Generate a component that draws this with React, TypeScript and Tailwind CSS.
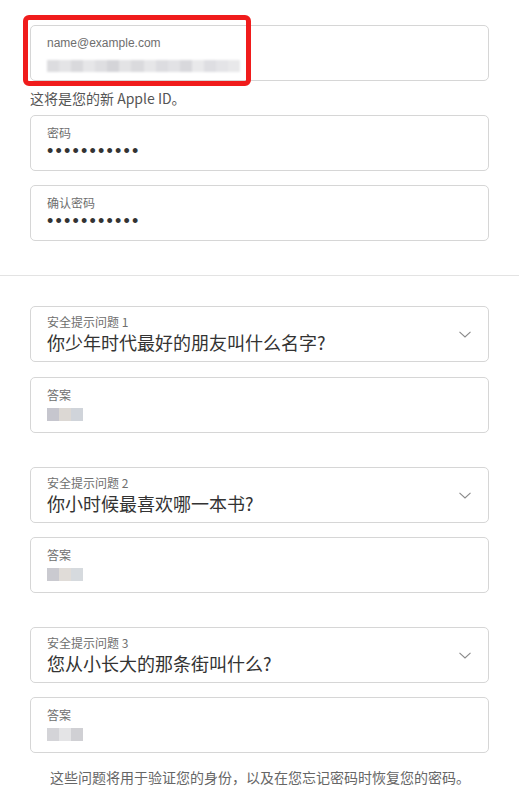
import React from "react";

const font = { fontFamily: '"Noto Sans CJK SC", "Liberation Sans", sans-serif' };

function Chevron() {
  return (
    <svg width="12" height="7" viewBox="0 0 12 7" className="shrink-0">
      <path d="M0.5 0.8 L6 6 L11.5 0.8" fill="none" stroke="#8a8a8a" strokeWidth="1.1" />
    </svg>
  );
}

function Blur({ cells }: { cells: string[] }) {
  return (
    <div className="flex h-[13px] blur-[0.6px]">
      {cells.map((c, i) => (
        <div key={i} className="h-full w-[12px]" style={{ background: c }} />
      ))}
    </div>
  );
}

function Box({ children, extra }: { children: React.ReactNode; extra?: string }) {
  return (
    <div className={"h-[56px] rounded-[5px] border border-[#d6d6d6] bg-white pl-[16px] pr-[20px] " + (extra || "")}>
      {children}
    </div>
  );
}

function Question({ n, q }: { n: number; q: string }) {
  return (
    <Box extra="flex items-start justify-between">
      <div className="flex flex-col pt-[8px]">
        <span className="text-[12px] leading-[14px] text-[#6e6e6e]">安全提示问题 {n}</span>
        <span className="mt-[2px] text-[18px] leading-[22px] text-[#333]">{q}</span>
      </div>
      <div className="mr-[-3px] mt-[24px]">
        <Chevron />
      </div>
    </Box>
  );
}

function Answer({ cells, mt }: { cells: string[]; mt: string }) {
  return (
    <Box extra={mt + " flex flex-col pt-[9px]"}>
      <span className="text-[12px] leading-[16px] text-[#6e6e6e]">答案</span>
      <div className="mt-[5px]">
        <Blur cells={cells} />
      </div>
    </Box>
  );
}

function Dots() {
  return (
    <span
      className="mt-[1px] text-[18px] leading-[18px] tracking-[2.2px] text-[#333]"
      style={{ fontFamily: '"Liberation Sans", sans-serif' }}
    >
      •••••••••••
    </span>
  );
}

export default function App() {
  return (
    <div className="relative min-h-[802px] w-[519px] bg-white" style={font}>
      <div className="px-[30px] pt-[25px]">
        <Box extra="flex flex-col pt-[9px]">
          <span className="text-[12px] leading-[16px] text-[#6e6e6e]" style={{ fontFamily: '"Liberation Sans", sans-serif' }}>
            name@example.com
          </span>
          <div className="mt-[9px] flex h-[12px] w-[193px] blur-[0.8px]">
            {["#dcdcdf", "#e4e4e6", "#d9d9dc", "#e6e6e8", "#dedee1", "#d4d4d8", "#e3e3e5", "#dadadd", "#e6e6e8", "#dcdce0", "#e2e2e5", "#d8d8dc", "#e9e9eb", "#dedee2", "#e4e4e7", "#e8e8ea"].map((c, i) => (
              <div key={i} className="h-full flex-1" style={{ background: c }} />
            ))}
          </div>
        </Box>
        <div className="mt-[6px] h-[22px] text-[14px] leading-[22px] text-[#555]">这将是您的新 Apple ID。</div>
        <div className="mt-[6px]">
          <Box extra="flex flex-col pt-[9px]">
            <span className="text-[12px] leading-[16px] text-[#6e6e6e]">密码</span>
            <Dots />
          </Box>
        </div>
        <Box extra="mt-[14px] flex flex-col pt-[9px]">
          <span className="text-[12px] leading-[16px] text-[#6e6e6e]">确认密码</span>
          <Dots />
        </Box>
      </div>
      <div className="mt-[34px] h-px w-full bg-[#e3e3e3]" />
      <div className="px-[30px] pt-[30px]">
        <Question n={1} q="你少年时代最好的朋友叫什么名字?" />
        <Answer mt="mt-[15px]" cells={["#c6c6ce", "#dcd8d4", "#d0d4da"]} />
        <div className="mt-[34px]">
          <Question n={2} q="你小时候最喜欢哪一本书?" />
        </div>
        <Answer mt="mt-[14px]" cells={["#cacad0", "#e0dcd8", "#d6dade"]} />
        <div className="mt-[34px]">
          <Question n={3} q="您从小长大的那条街叫什么?" />
        </div>
        <Answer mt="mt-[14px]" cells={["#d4d4d8", "#e4e4e6", "#d0d0d4"]} />
        <div className="mt-[13px] pl-[20px] text-[14px] leading-[22px] text-[#666]">
          这些问题将用于验证您的身份，以及在您忘记密码时恢复您的密码。
        </div>
      </div>
      <div className="absolute left-[23px] top-[15px] h-[71px] w-[228px] rounded-[6px] border-[5px] border-[#f01c1c]" />
    </div>
  );
}
